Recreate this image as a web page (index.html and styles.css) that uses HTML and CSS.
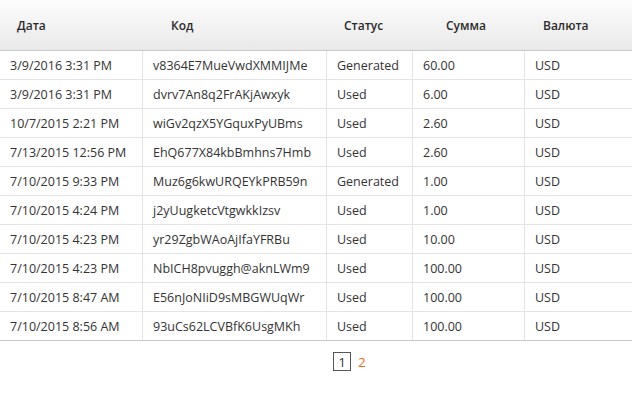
FILE: index.html
```html
<!DOCTYPE html>
<html lang="ru">
<head>
<meta charset="utf-8">
<title>Коды</title>
<link rel="stylesheet" href="styles.css">
</head>
<body>
<div class="grid">
  <div class="row head">
    <div class="th th-date">Дата</div>
    <div class="th th-code">Код</div>
    <div class="th th-status">Статус</div>
    <div class="th th-sum">Сумма</div>
    <div class="th th-cur">Валюта</div>
  </div>
  <div class="row"><div class="td">3/9/2016 3:31 PM</div><div class="td">v8364E7MueVwdXMMIJMe</div><div class="td">Generated</div><div class="td">60.00</div><div class="td">USD</div></div>
  <div class="row"><div class="td">3/9/2016 3:31 PM</div><div class="td">dvrv7An8q2FrAKjAwxyk</div><div class="td">Used</div><div class="td">6.00</div><div class="td">USD</div></div>
  <div class="row"><div class="td">10/7/2015 2:21 PM</div><div class="td">wiGv2qzX5YGquxPyUBms</div><div class="td">Used</div><div class="td">2.60</div><div class="td">USD</div></div>
  <div class="row"><div class="td">7/13/2015 12:56 PM</div><div class="td">EhQ677X84kbBmhns7Hmb</div><div class="td">Used</div><div class="td">2.60</div><div class="td">USD</div></div>
  <div class="row"><div class="td">7/10/2015 9:33 PM</div><div class="td">Muz6g6kwURQEYkPRB59n</div><div class="td">Generated</div><div class="td">1.00</div><div class="td">USD</div></div>
  <div class="row"><div class="td">7/10/2015 4:24 PM</div><div class="td">j2yUugketcVtgwkkIzsv</div><div class="td">Used</div><div class="td">1.00</div><div class="td">USD</div></div>
  <div class="row"><div class="td">7/10/2015 4:23 PM</div><div class="td">yr29ZgbWAoAjIfaYFRBu</div><div class="td">Used</div><div class="td">10.00</div><div class="td">USD</div></div>
  <div class="row"><div class="td">7/10/2015 4:23 PM</div><div class="td">NbICH8pvuggh@aknLWm9</div><div class="td">Used</div><div class="td">100.00</div><div class="td">USD</div></div>
  <div class="row"><div class="td">7/10/2015 8:47 AM</div><div class="td">E56nJoNIiD9sMBGWUqWr</div><div class="td">Used</div><div class="td">100.00</div><div class="td">USD</div></div>
  <div class="row last"><div class="td">7/10/2015 8:56 AM</div><div class="td">93uCs62LCVBfK6UsgMKh</div><div class="td">Used</div><div class="td">100.00</div><div class="td">USD</div></div>
</div>
<div class="pager">
  <span class="page current">1</span>
  <a class="page link" href="#">2</a>
</div>
</body>
</html>
```

FILE: styles.css
```css
html, body {
  margin: 0;
  padding: 0;
  background: #fff;
}
body {
  font-family: "Open Sans", Lato, "Liberation Sans", sans-serif;
  font-size: 12.5px;
  color: #333;
  width: 632px;
}
.grid {
  display: flex;
  flex-direction: column;
}
.row {
  display: grid;
  grid-template-columns: 143px 184px 86px 112px 107px;
  border-bottom: 1px solid #e4e4e4;
}
.row.last {
  border-bottom-color: #c8c8c8;
}
.head {
  height: 50px;
  background: linear-gradient(#fcfcfc, #e9e9e9);
  border-bottom: 1px solid #c9c9c9;
}
.th {
  display: flex;
  align-items: center;
  font-size: 12px;
  font-weight: 600;
  color: #2b2b2b;
}
.th-date { padding-left: 17px; }
.th-code { padding-left: 28px; }
.th-status { padding-left: 17px; }
.th-sum { padding-left: 33px; }
.th-cur { padding-left: 18px; }
.td {
  height: 28px;
  display: flex;
  align-items: center;
  padding-left: 10px;
  border-right: 1px solid #e4e4e4;
  white-space: nowrap;
  box-sizing: border-box;
}
.td:last-child {
  border-right: none;
}
.pager {
  display: flex;
  align-items: center;
  padding: 11px 0 0 333px;
  gap: 7px;
}
.page {
  font-size: 13.5px;
  line-height: 16px;
}
.current {
  width: 18px;
  height: 19px;
  box-sizing: border-box;
  border: 1px solid #555;
  display: flex;
  align-items: center;
  justify-content: center;
  color: #333;
}
.link {
  color: #f06a1c;
  text-decoration: none;
}
```
